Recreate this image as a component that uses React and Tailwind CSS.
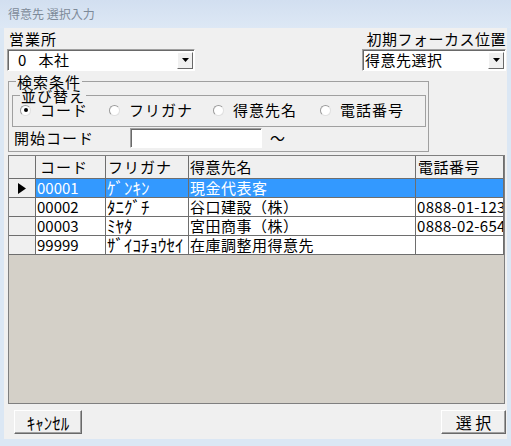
import React from "react";

function Combo({ w, text, pl }) {
  return (
    <div className={`${w} h-[22px] bg-white border border-t-[#a0a0a0] border-l-[#a0a0a0] border-r-white border-b-white shadow-[inset_1px_1px_0_#696969] flex items-center`}>
      <div className={`flex-1 ${pl} text-[15px] leading-[18px] whitespace-pre tracking-[0.5px]`}>{text}</div>
      <div className="w-[16px] h-[17px] mr-[1px] bg-[#f0f0f0] border border-t-white border-l-white border-r-[#696969] border-b-[#696969] flex items-center justify-center">
        <svg width="7" height="4" viewBox="0 0 7 4"><path d="M0 0H7L3.5 4Z" fill="#000" /></svg>
      </div>
    </div>
  );
}

function Radio({ checked, label, w }) {
  return (
    <div className={`${w} flex items-center`}>
      <span className="w-[11px] h-[11px] rounded-full bg-white border border-t-[#9a9a9a] border-l-[#9a9a9a] border-r-[#e0e0e0] border-b-[#e0e0e0] flex items-center justify-center shrink-0">
        {checked && <span className="w-[4px] h-[4px] rounded-full bg-black" />}
      </span>
      <span className="ml-[9px] text-[15px] leading-[18px] tracking-[1px] whitespace-nowrap">{label}</span>
    </div>
  );
}

const rows = [
  { code: "00001", kana: "ｹﾞﾝｷﾝ", name: "現金代表客", tel: "", sel: true },
  { code: "00002", kana: "ﾀﾆｸﾞﾁ", name: "谷口建設（株）", tel: "0888-01-1234" },
  { code: "00003", kana: "ﾐﾔﾀ", name: "宮田商事（株）", tel: "0888-02-6543" },
  { code: "99999", kana: "ｻﾞｲｺﾁｮｳｾｲ", name: "在庫調整用得意先", tel: "" },
];

export default function App() {
  return (
    <div className="w-[511px] h-[446px] bg-[#dbe7f4] flex flex-col font-['Noto_Sans_CJK_JP',sans-serif] text-black overflow-hidden">
      <div className="h-[28px] shrink-0 bg-gradient-to-b from-[#d2dff0] to-[#dde8f5] flex items-center pl-[8px] text-[12px] text-[#7d8a99] leading-none">
        得意先 選択入力
      </div>
      <div className="mx-[4px] h-[411px] shrink-0 bg-[#f0f0f0] flex flex-col">
        <div className="flex justify-between pt-[2px]">
          <div className="flex flex-col pl-[3px]">
            <div className="pl-[2px] text-[15px] leading-[18px] h-[19px] tracking-[1px]">営業所</div>
            <Combo w="w-[188px]" pl="pl-[10px]" text="0   本社" />
          </div>
          <div className="flex flex-col items-end pr-[1px]">
            <div className="text-[15px] leading-[18px] h-[19px] tracking-[0.5px] whitespace-nowrap">初期フォーカス位置</div>
            <Combo w="w-[144px]" pl="pl-[2px]" text="得意先選択" />
          </div>
        </div>

        <fieldset className="mt-[3px] ml-[4px] w-[421px] h-[78px] border border-[#a0a0a0] p-0 m-0 min-w-0">
          <legend className="ml-[7px] px-[1px] text-[15px] leading-[15px] tracking-[1px]">検索条件</legend>
          <fieldset className="-mt-[1px] ml-[3px] w-[414px] h-[39px] border border-[#a0a0a0] p-0 min-w-0">
            <legend className="ml-[7px] px-[1px] text-[15px] leading-[15px] tracking-[1px]">並び替え</legend>
            <div className="-mt-[2px] pl-[7px] h-[18px] flex items-center">
              <Radio checked w="w-[89px]" label="コード" />
              <Radio w="w-[104px]" label="フリガナ" />
              <Radio w="w-[107px]" label="得意先名" />
              <Radio w="w-[90px]" label="電話番号" />
            </div>
          </fieldset>
          <div className="mt-[1px] pl-[5px] h-[20px] flex items-center">
            <div className="w-[116px] text-[15px] leading-[18px] tracking-[1px]">開始コード</div>
            <div className="w-[132px] h-[20px] bg-white border border-t-[#a0a0a0] border-l-[#a0a0a0] border-r-white border-b-white shadow-[inset_1px_1px_0_#696969]" />
            <div className="ml-[8px] text-[15px] leading-[18px]">～</div>
          </div>
        </fieldset>

        <div className="mt-[3px] ml-[4px] w-[497px] h-[249px] border border-[#7f7f7f] bg-[#d4d0c8] flex flex-col text-[15px] leading-[18px]">
          <div className="h-[23px] flex shrink-0">
            <div className="w-[27px] bg-[#f0f0f0] border-r border-b border-[#6e6e6e]" />
            <div className="w-[70px] bg-[#f0f0f0] border-r border-b border-[#6e6e6e] pl-[4px] flex items-center tracking-[1px]">コード</div>
            <div className="w-[83px] bg-[#f0f0f0] border-r border-b border-[#6e6e6e] pl-[2px] flex items-center tracking-[1px]">フリガナ</div>
            <div className="w-[227px] bg-[#f0f0f0] border-r border-b border-[#6e6e6e] pl-[1px] flex items-center tracking-[0.5px]">得意先名</div>
            <div className="w-[88px] bg-[#f0f0f0] border-r border-b border-[#6e6e6e] pl-[2px] flex items-center tracking-[0.5px]">電話番号</div>
          </div>
          {rows.map((r) => {
            const cell = r.sel
              ? "bg-[#3399ff] text-white"
              : "bg-white text-black";
            return (
              <div key={r.code} className="h-[19px] flex shrink-0">
                <div className="w-[27px] bg-[#f0f0f0] border-r border-b border-[#6e6e6e] flex items-center pl-[9px]">
                  {r.sel && (
                    <svg width="8" height="11" viewBox="0 0 8 11"><path d="M0 0L8 5.5L0 11Z" fill="#000" /></svg>
                  )}
                </div>
                <div className={`w-[70px] ${cell} border-r border-b border-[#6e6e6e] pl-[1px] flex items-center overflow-hidden whitespace-nowrap`}>{r.code}</div>
                <div className={`w-[83px] ${cell} border-r border-b border-[#6e6e6e] pl-[1px] flex items-center overflow-hidden whitespace-nowrap text-[17px]`}>{r.kana}</div>
                <div className={`w-[227px] ${cell} border-r border-b border-[#6e6e6e] pl-[1px] flex items-center overflow-hidden whitespace-nowrap tracking-[0.5px]`}>{r.name}</div>
                <div className={`w-[88px] ${cell} border-r border-b border-[#6e6e6e] pl-[1px] flex items-center overflow-hidden whitespace-nowrap tracking-[0.3px]`}>{r.tel}</div>
              </div>
            );
          })}
        </div>

        <div className="mt-[6px] flex justify-between">
          <button className="ml-[10px] w-[68px] h-[24px] bg-[#f0f0f0] border border-t-white border-l-white border-r-[#696969] border-b-[#696969] shadow-[inset_-1px_-1px_0_#a0a0a0] text-[17px] leading-none flex items-center justify-center">
            ｷｬﾝｾﾙ
          </button>
          <button className="mr-[1px] w-[65px] h-[24px] bg-[#f0f0f0] border border-t-white border-l-white border-r-[#696969] border-b-[#696969] shadow-[inset_-1px_-1px_0_#a0a0a0] text-[16px] leading-none flex items-center justify-center">
            選 択
          </button>
        </div>
      </div>
    </div>
  );
}
